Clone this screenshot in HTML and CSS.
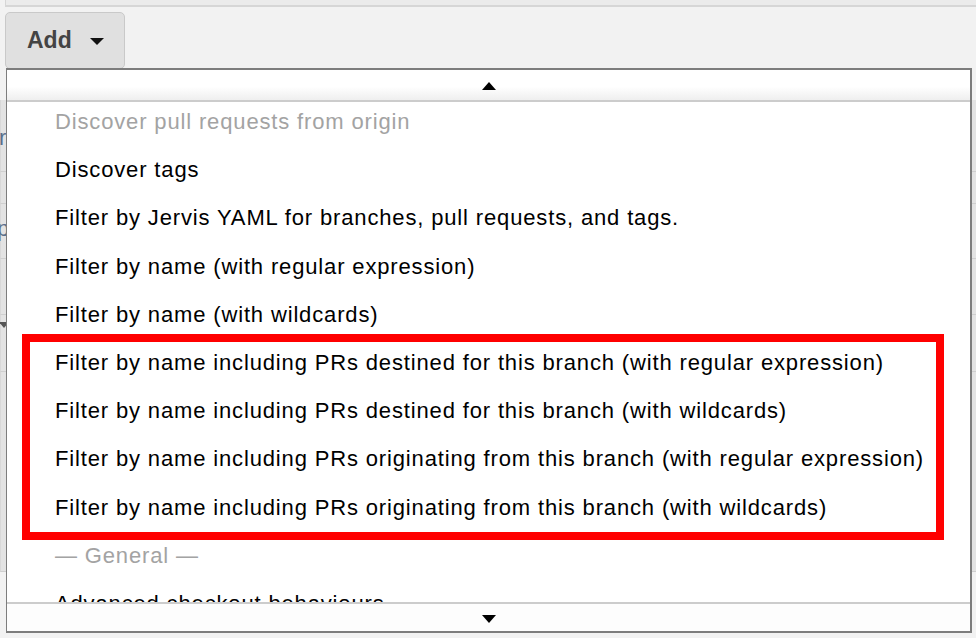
FILE: index.html
```html
<!DOCTYPE html>
<html>
<head>
<meta charset="utf-8">
<link rel="stylesheet" href="styles.css">
</head>
<body>
<div class="topbar"></div>
<div class="toolbar">
  <button class="add-btn">Add <span class="caret"></span></button>
</div>
<div class="bg-table">
  <div class="bg-row r1"><span class="lbl">r</span></div>
  <div class="bg-row r2"></div>
  <div class="bg-row r3"><span class="lbl">p</span></div>
  <div class="bg-row r4"></div>
  <div class="bg-row r5"><span class="tri"></span></div>
  <div class="bg-row r6"></div>
</div>

<div class="menu">
  <div class="scroll scroll-up"><span class="arrow-up"></span></div>
  <ul class="list">
    <li class="item disabled first">Discover pull requests from origin</li>
    <li class="item">Discover tags</li>
    <li class="item">Filter by Jervis YAML for branches, pull requests, and tags.</li>
    <li class="item">Filter by name (with regular expression)</li>
    <li class="item">Filter by name (with wildcards)</li>
    <li class="item">Filter by name including PRs destined for this branch (with regular expression)</li>
    <li class="item">Filter by name including PRs destined for this branch (with wildcards)</li>
    <li class="item">Filter by name including PRs originating from this branch (with regular expression)</li>
    <li class="item">Filter by name including PRs originating from this branch (with wildcards)</li>
    <li class="item disabled">— General —</li>
    <li class="item">Advanced checkout behaviours</li>
  </ul>
  <div class="scroll scroll-down"><span class="arrow-down"></span></div>
</div>

<div class="highlight"></div>
</body>
</html>
```
FILE: styles.css
```css
html, body {
  margin: 0;
  padding: 0;
}
body {
  background: #f2f2f2;
  font-family: "Liberation Sans", Arial, sans-serif;
  width: 976px;
  height: 638px;
  overflow: hidden;
  position: relative;
}
.topbar {
  height: 5px;
  background: #ebebeb;
  border-bottom: 2px solid #d6d6d6;
  margin-left: 5px;
  border-left: 1px solid #d6d6d6;
}
.toolbar {
  padding: 5px 0 0 5px;
  height: 88px;
}
.add-btn {
  display: flex;
  align-items: center;
  width: 120px;
  height: 57px;
  margin: 0;
  padding: 0 0 0 21px;
  background: #e0e0e0;
  border: 1px solid #c9c9c9;
  border-radius: 5px;
  font-family: "Liberation Sans", Arial, sans-serif;
  font-weight: bold;
  font-size: 23px;
  color: #444;
  box-sizing: border-box;
  cursor: pointer;
}
.caret {
  display: inline-block;
  width: 0;
  height: 0;
  margin-left: 18px;
  margin-top: 2px;
  border-left: 7px solid transparent;
  border-right: 7px solid transparent;
  border-top: 7px solid #111;
}
.bg-table {
  background: #e3e3e3;
}
.bg-row {
  border-bottom: 1px solid #cfcfcf;
  border-left: 1px solid #d8d8d8;
  box-sizing: border-box;
  font-size: 22px;
  color: #5a6f8c;
  display: flex;
  align-items: center;
}
.r1 { height: 72px; }
.r2 { height: 32px; }
.r3 { height: 55px; }
.r4 { height: 56px; }
.r5 { height: 57px; }
.r6 { height: 200px; }
.r1 .lbl { margin-left: -2px; margin-top: 4px; }
.r3 .lbl { margin-left: -4px; margin-top: -4px; }
.tri {
  width: 0;
  height: 0;
  margin-left: -2px;
  margin-top: -36px;
  border-left: 5px solid transparent;
  border-right: 5px solid transparent;
  border-top: 6px solid #555;
}

.menu {
  position: absolute;
  left: 6px;
  top: 68px;
  width: 966px;
  box-sizing: border-box;
  border: 2px solid #7d7d7d;
  border-left-width: 1px;
  background: #fff;
}
.scroll {
  display: flex;
  justify-content: center;
  align-items: center;
}
.scroll-up {
  height: 30px;
  background: linear-gradient(#fff 55%, #efefef);
  border-bottom: 2px solid #cccccc;
}
.scroll-down {
  height: 27px;
  background: #fdfdfd;
  border-top: 2px solid #cccccc;
}
.arrow-up {
  width: 0;
  height: 0;
  margin-top: 2px;
  border-left: 7px solid transparent;
  border-right: 7px solid transparent;
  border-bottom: 8px solid #000;
}
.arrow-down {
  width: 0;
  height: 0;
  margin-top: 2px;
  border-left: 7px solid transparent;
  border-right: 7px solid transparent;
  border-top: 8px solid #000;
}
.list {
  list-style: none;
  margin: 0;
  padding: 0;
  height: 500px;
  overflow: hidden;
  background: #fff;
}
.item {
  height: 48.2px;
  line-height: 48.2px;
  padding-left: 48px;
  font-size: 22px;
  letter-spacing: 0.85px;
  color: #000;
  white-space: nowrap;
}
.item.first {
  margin-top: -4px;
}
.item.disabled {
  color: #a3a3a3;
}
.highlight {
  position: absolute;
  left: 22px;
  top: 334px;
  width: 922px;
  height: 206px;
  box-sizing: border-box;
  border: 8px solid #ff0000;
}
```
